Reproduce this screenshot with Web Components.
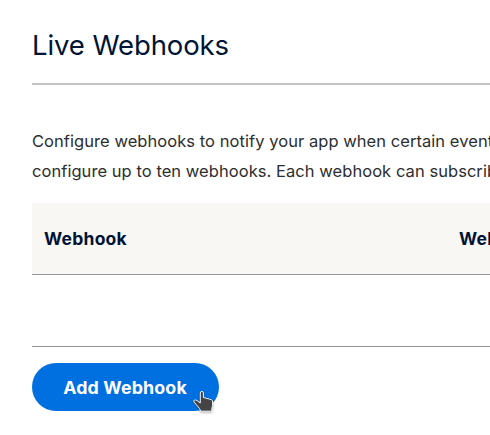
<!DOCTYPE html>
<html lang="en">
<head>
<meta charset="utf-8">
<title>Live Webhooks</title>
<style>
html, body { margin: 0; height: 435px; overflow: hidden; background: #fff; }
body { font-family: Inter, "Liberation Sans", sans-serif; color: #2c2e2f; }
</style>
</head>
<body>
<webhooks-page></webhooks-page>
<script>
function define(name, html) {
  const t = document.createElement('template');
  t.innerHTML = html;
  customElements.define(name, class extends HTMLElement {
    constructor() {
      super();
      this.attachShadow({ mode: 'open' }).appendChild(t.content.cloneNode(true));
    }
  });
}

define('section-heading', `
<style>
:host { display: block; height: 83px; border-bottom: 2px solid #c4c4c4; }
h2 { margin: 0; padding-top: 27px; font-size: 27.5px; line-height: 36px; font-weight: 400; letter-spacing: -0.1px; color: #001435; white-space: nowrap; }
</style>
<h2><slot></slot></h2>`);

define('section-intro', `
<style>
:host { display: block; padding-top: 41px; height: 77px; font-size: 16.5px; line-height: 30px; letter-spacing: 0.055px; white-space: nowrap; }
</style>
<slot></slot>`);

define('column-header', `
<style>
:host { display: block; padding: 0 0 0 12px; font-size: 17.5px; font-weight: 700; line-height: 71px; letter-spacing: 0.25px; color: #001435; white-space: nowrap; }
</style>
<slot></slot>`);

define('webhook-table', `
<style>
:host { display: block; }
.head { display: grid; grid-template-columns: 415px 415px; height: 71px; background: #f9f7f4; border-bottom: 1px solid #929496; }
.body { height: 71px; border-bottom: 1px solid #929496; }
</style>
<div class="head"><slot></slot></div>
<div class="body"></div>`);

define('hand-cursor', `
<style>
:host { display: block; width: 26px; height: 27px; }
svg { display: block; overflow: visible; filter: drop-shadow(0 1px 1px rgba(0,0,0,.3)); }
</style>
<svg width="26" height="27" viewBox="0 0 26 27">
<path d="M7.3 3 Q7.3 1.4 8.8 1.4 Q10.4 1.4 10.4 3 V7.6 L13 8 L13.4 8.5 L16 8.8 L16.4 9.3 L18.5 9.7 Q19.6 10.2 19.6 12 V15.5 L18.8 18.5 V21.2 H7.6 L6.6 18.6 L1 12 Q0.4 10.6 1.5 10.1 Q2.8 9.6 3.9 10.5 L7.3 13 Z" fill="#444" stroke="#f4f4f4" stroke-width="1" stroke-linejoin="round"/>
</svg>`);

define('pill-button', `
<style>
:host { display: block; position: relative; width: 187px; height: 48px; }
button { display: block; width: 100%; height: 48px; margin: 0; padding: 1px 1px 0 0; border: 0; border-radius: 24px; background: #0070e0; color: #fff; font: 700 17.8px/47px Inter, "Liberation Sans", sans-serif; letter-spacing: 0.15px; white-space: nowrap; }
hand-cursor { position: absolute; left: 161px; top: 27px; }
</style>
<button><slot></slot></button><hand-cursor></hand-cursor>`);

define('webhooks-page', `
<style>
:host { display: block; width: 458px; height: 435px; padding-left: 32px; overflow: hidden; }
pill-button { margin-top: 16px; }
</style>
<section-heading>Live Webhooks</section-heading>
<section-intro>Configure webhooks to notify your app when certain events<br>configure up to ten webhooks. Each webhook can subscribe</section-intro>
<webhook-table><column-header>Webhook</column-header><column-header>Webhook</column-header></webhook-table>
<pill-button>Add Webhook</pill-button>`);
</script>
</body>
</html>
